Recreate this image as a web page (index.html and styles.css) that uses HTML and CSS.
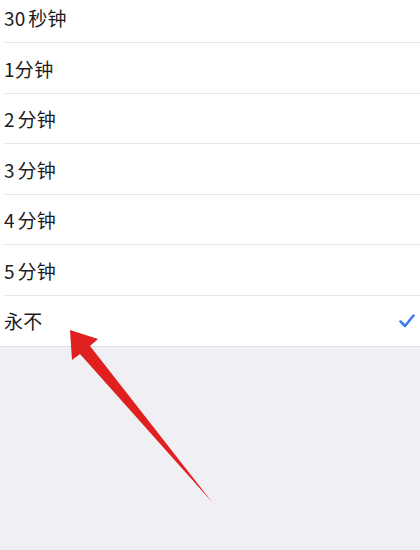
FILE: index.html
```html
<!DOCTYPE html>
<html lang="zh-CN">
<head>
<meta charset="utf-8">
<title>自动锁定</title>
<link rel="stylesheet" href="styles.css">
</head>
<body>
  <ul class="options">
    <li class="option">30 秒钟</li>
    <li class="option">1分钟</li>
    <li class="option">2 分钟</li>
    <li class="option">3 分钟</li>
    <li class="option">4 分钟</li>
    <li class="option">5 分钟</li>
    <li class="option selected">永不
      <svg class="check" viewBox="0 0 16 14" width="16" height="14" aria-hidden="true">
        <path d="M1.5 7.5 L6 12 L14.5 1.5" fill="none" stroke="#3a7bf0" stroke-width="2.5" stroke-linecap="round" stroke-linejoin="round"/>
      </svg>
    </li>
  </ul>

  <svg class="pointer" viewBox="0 0 420 550" width="420" height="550" aria-hidden="true">
    <polygon points="70,330 98,339 90,346 212,502 80,354 72,360" fill="#e0201f"/>
  </svg>
</body>
</html>
```

FILE: styles.css
```css
html, body {
  margin: 0;
  padding: 0;
}

body {
  background: #efeff4;
  font-family: "Noto Sans CJK SC", "Noto Sans", sans-serif;
  color: #1c1c1e;
  width: 420px;
  height: 550px;
  overflow: hidden;
  position: relative;
}

.options {
  list-style: none;
  margin: -7.5px 0 0;
  padding: 0;
  background: #ffffff;
  border-bottom: 1px solid #e2e2e6;
}

.option {
  position: relative;
  height: 50.5px;
  box-sizing: border-box;
  padding: 0 5px 0 4px;
  display: flex;
  align-items: center;
  justify-content: space-between;
  font-size: 19px;
  letter-spacing: 0.3px;
  word-spacing: -2px;
}

.option::after {
  content: "";
  position: absolute;
  left: 4px;
  right: 0;
  bottom: 0;
  height: 1px;
  background: #e6e6e9;
}

.option:last-child::after {
  display: none;
}

.check {
  display: block;
}

.pointer {
  position: absolute;
  left: 0;
  top: 0;
  pointer-events: none;
}
```
